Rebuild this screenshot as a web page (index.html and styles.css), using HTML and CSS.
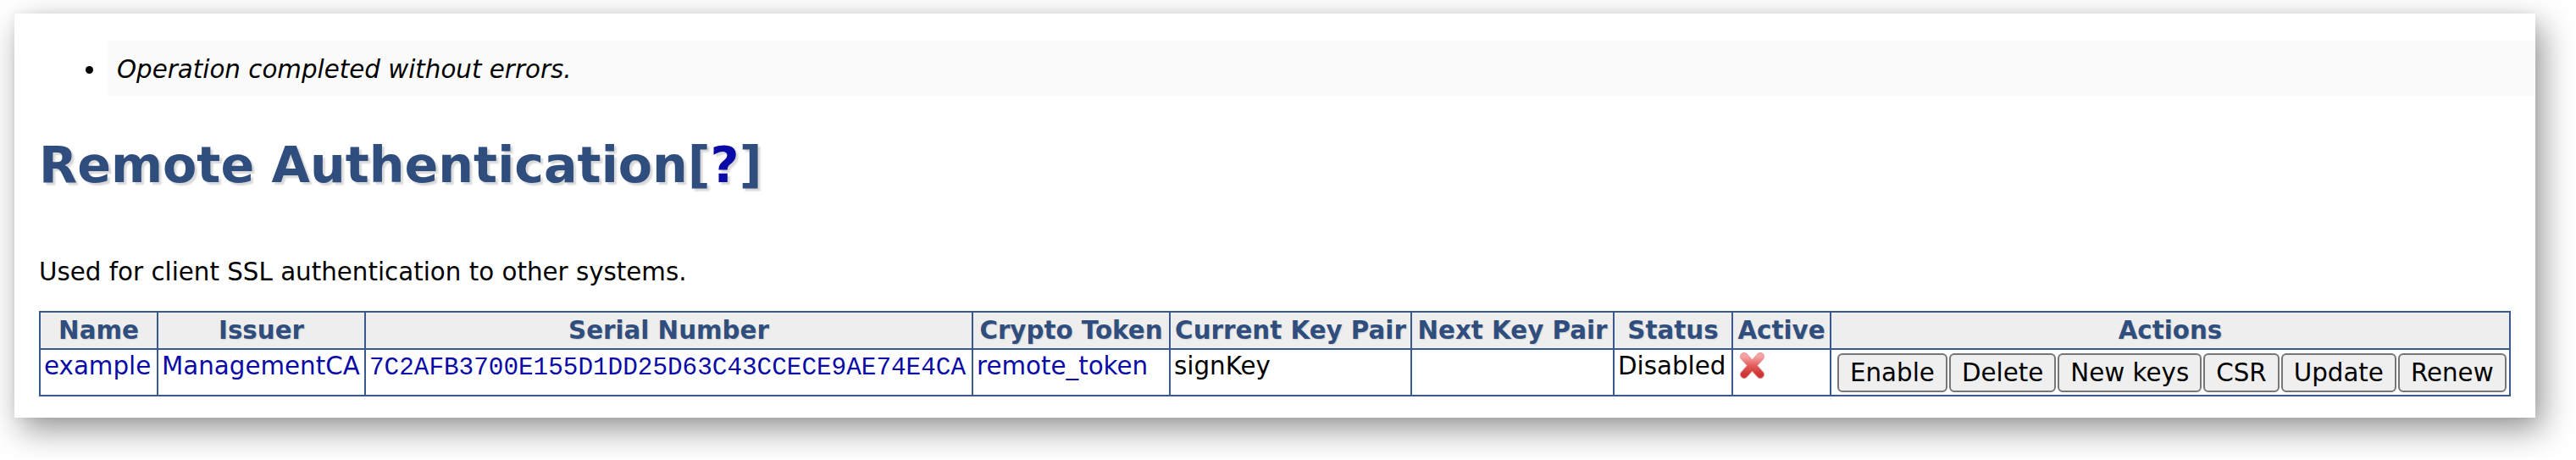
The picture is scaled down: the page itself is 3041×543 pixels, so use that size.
FILE: index.html
```html
<!DOCTYPE html>
<html lang="en">
<head>
  <meta charset="UTF-8" />
  <title>Remote Authentication</title>
  <link rel="stylesheet" href="styles.css">
</head>
<body>
  <div class="window">
    <ul class="messages">
      <li>Operation completed without errors.</li>
    </ul>

    <h1>Remote Authentication[<a href="#">?</a>]</h1>

    <p class="desc">Used for client SSL authentication to other systems.</p>

    <table class="grid">
      <thead>
        <tr>
          <th class="c-name">Name</th>
          <th class="c-issuer">Issuer</th>
          <th class="c-serial">Serial Number</th>
          <th class="c-token">Crypto Token</th>
          <th class="c-current">Current Key Pair</th>
          <th class="c-next">Next Key Pair</th>
          <th class="c-status">Status</th>
          <th class="c-active">Active</th>
          <th>Actions</th>
        </tr>
      </thead>
      <tbody>
        <tr>
          <td><a href="#">example</a></td>
          <td><a href="#">ManagementCA</a></td>
          <td><a href="#" class="mono">7C2AFB3700E155D1DD25D63C43CCECE9AE74E4CA</a></td>
          <td><a href="#">remote_token</a></td>
          <td>signKey</td>
          <td></td>
          <td>Disabled</td>
          <td class="active">
            <svg class="icon-off" width="34" height="34" viewBox="0 0 34 34">
              <defs>
                <linearGradient id="redx" x1="0" y1="0" x2="0" y2="1">
                  <stop offset="0" stop-color="#f7a3a3"/>
                  <stop offset="0.5" stop-color="#e45c5c"/>
                  <stop offset="1" stop-color="#cf3434"/>
                </linearGradient>
              </defs>
              <g stroke-linecap="round">
                <path d="M7 7 L26 28 M26 7 L7 28" stroke="#c94a4a" stroke-width="10" opacity="0.55"/>
                <path d="M7 7 L26 28 M26 7 L7 28" stroke="url(#redx)" stroke-width="8"/>
              </g>
            </svg>
          </td>
          <td class="actions">
            <div class="btns">
              <button>Enable</button>
              <button>Delete</button>
              <button>New keys</button>
              <button>CSR</button>
              <button>Update</button>
              <button>Renew</button>
            </div>
          </td>
        </tr>
      </tbody>
    </table>
  </div>
</body>
</html>
```

FILE: styles.css
```css
* {
  box-sizing: border-box;
}

body {
  margin: 0;
  background: #fff;
  font-family: "DejaVu Sans", Verdana, sans-serif;
  font-size: 29.33px;
  color: #000;
}

.window {
  margin: 16px 48px 49px 17px;
  padding: 32px 29px 25px;
  background: #fff;
  box-shadow: 8px 14px 36px rgba(0, 0, 0, 0.42), 0 0 10px rgba(0, 0, 0, 0.05);
}

a {
  color: #0a0aa6;
  text-decoration: none;
}

.messages {
  margin: 0 -29px 0 0;
  padding-left: 80px;
  list-style: disc;
}

.messages li {
  background: #fbfbfb;
  padding: 17px 12px 14px;
  font-style: italic;
  border-radius: 4px 0 0 4px;
}

h1 {
  margin: 48px 0 0;
  font-size: 58.67px;
  font-weight: bold;
  color: #2f4e7e;
  text-shadow: 3px 3px 2px #d8d8d8;
}

.desc {
  margin: 75px 0 29px;
}

.grid {
  width: 100%;
  border-collapse: collapse;
  table-layout: fixed;
}

.grid th,
.grid td {
  border: 2px solid #3a5a8e;
}

.grid th {
  padding: 4px 2px;
  background: #eee;
  color: #2f4e7e;
  font-weight: bold;
  text-align: center;
  white-space: nowrap;
  text-shadow: 1px 1px 1px #d0d0d0;
}

.grid td {
  padding: 2px 4px;
  vertical-align: top;
  text-align: left;
  white-space: nowrap;
}

.c-name { width: 139px; }
.c-issuer { width: 245px; }
.c-serial { width: 717px; }
.c-token { width: 233px; }
.c-current { width: 285px; }
.c-next { width: 239px; }
.c-status { width: 140px; }
.c-active { width: 116px; }

.mono {
  font-family: "Liberation Mono", "Courier New", monospace;
}

.grid td.active {
  padding: 0 4px;
}

.icon-off {
  display: block;
  margin: 1px 0 0 2px;
}

.grid td.actions {
  padding: 4px 4px 3px 7px;
}

.btns {
  display: flex;
  gap: 2px;
}

button {
  font-family: "DejaVu Sans", Verdana, sans-serif;
  font-size: 29.33px;
  line-height: normal;
  color: #000;
  background: #efefef;
  border: 2px solid #767676;
  border-radius: 6px;
  padding: 4px 13px;
  margin: 0;
}
```
